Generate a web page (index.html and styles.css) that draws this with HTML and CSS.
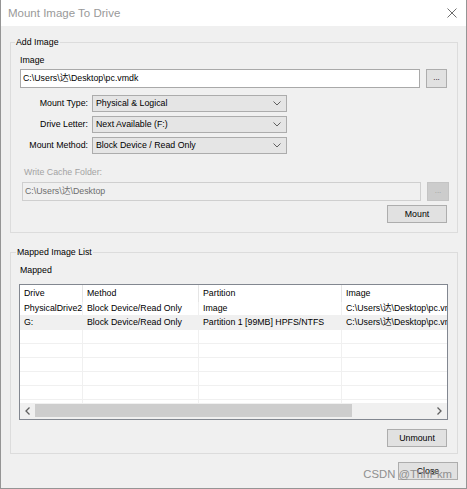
FILE: index.html
```html
<!DOCTYPE html>
<html>
<head>
<meta charset="utf-8">
<link rel="stylesheet" href="styles.css">
</head>
<body>
<div class="window">
  <div class="titlebar">
    <span class="title">Mount Image To Drive</span>
    <svg class="close-x" width="10" height="10" viewBox="0 0 10 10"><path d="M0.5 0.5 L9.5 9.5 M9.5 0.5 L0.5 9.5" stroke="#6e6e6e" stroke-width="1" fill="none"/></svg>
  </div>
  <div class="content">
    <div class="group group-add">
      <span class="legend">Add Image</span>
      <div class="lbl">Image</div>
      <div class="path-row">
        <div class="input">C:\Users\达\Desktop\pc.vmdk</div>
        <div class="btn btn-dots">...</div>
      </div>
      <div class="form-grid">
        <div class="flabel">Mount Type:</div>
        <div class="select"><span>Physical &amp; Logical</span><svg width="8" height="5" viewBox="0 0 8 5"><path d="M0.5 0.5 L4 4 L7.5 0.5" stroke="#5f5f5f" fill="none"/></svg></div>
        <div class="flabel">Drive Letter:</div>
        <div class="select"><span>Next Available (F:)</span><svg width="8" height="5" viewBox="0 0 8 5"><path d="M0.5 0.5 L4 4 L7.5 0.5" stroke="#5f5f5f" fill="none"/></svg></div>
        <div class="flabel">Mount Method:</div>
        <div class="select"><span>Block Device / Read Only</span><svg width="8" height="5" viewBox="0 0 8 5"><path d="M0.5 0.5 L4 4 L7.5 0.5" stroke="#5f5f5f" fill="none"/></svg></div>
      </div>
      <div class="lbl lbl-disabled">Write Cache Folder:</div>
      <div class="path-row path-row-disabled">
        <div class="input input-disabled">C:\Users\达\Desktop</div>
        <div class="btn btn-dots btn-disabled">...</div>
      </div>
      <div class="btn-line">
        <div class="btn">Mount</div>
      </div>
    </div>

    <div class="group group-list">
      <span class="legend">Mapped Image List</span>
      <div class="lbl lbl-mapped">Mapped</div>
      <div class="listview">
        <div class="lv-head">
          <div class="cell c1">Drive</div>
          <div class="cell c2">Method</div>
          <div class="cell c3">Partition</div>
          <div class="cell c4">Image</div>
        </div>
        <div class="lv-body">
          <div class="lv-row">
            <div class="cell c1">PhysicalDrive2</div>
            <div class="cell c2">Block Device/Read Only</div>
            <div class="cell c3">Image</div>
            <div class="cell c4">C:\Users\达\Desktop\pc.vmdk</div>
          </div>
          <div class="lv-row lv-sel">
            <div class="cell c1">G:</div>
            <div class="cell c2">Block Device/Read Only</div>
            <div class="cell c3">Partition 1 [99MB] HPFS/NTFS</div>
            <div class="cell c4">C:\Users\达\Desktop\pc.vmdk</div>
          </div>
          <div class="lv-row"><div class="cell c1"></div><div class="cell c2"></div><div class="cell c3"></div><div class="cell c4"></div></div>
          <div class="lv-row"><div class="cell c1"></div><div class="cell c2"></div><div class="cell c3"></div><div class="cell c4"></div></div>
          <div class="lv-row"><div class="cell c1"></div><div class="cell c2"></div><div class="cell c3"></div><div class="cell c4"></div></div>
          <div class="lv-row"><div class="cell c1"></div><div class="cell c2"></div><div class="cell c3"></div><div class="cell c4"></div></div>
          <div class="lv-row"><div class="cell c1"></div><div class="cell c2"></div><div class="cell c3"></div><div class="cell c4"></div></div>
          <div class="lv-row"><div class="cell c1"></div><div class="cell c2"></div><div class="cell c3"></div><div class="cell c4"></div></div>
        </div>
        <div class="hscroll">
          <div class="sb-arrow"><svg width="5" height="8" viewBox="0 0 5 8"><path d="M4.5 0.5 L1 4 L4.5 7.5" stroke="#606060" stroke-width="1.3" fill="none"/></svg></div>
          <div class="sb-track"><div class="sb-thumb"></div></div>
          <div class="sb-arrow"><svg width="5" height="8" viewBox="0 0 5 8"><path d="M0.5 0.5 L4 4 L0.5 7.5" stroke="#606060" stroke-width="1.3" fill="none"/></svg></div>
        </div>
      </div>
      <div class="btn-line btn-line-unmount">
        <div class="btn">Unmount</div>
      </div>
    </div>

    <div class="footer">
      <div class="btn">Close</div>
      <span class="watermark">CSDN @ThhPkm</span>
    </div>
  </div>
</div>
</body>
</html>
```
FILE: styles.css
```css
html, body {
  margin: 0;
  padding: 0;
  background: #f0f0f0;
}
body {
  font-family: "Liberation Sans", "Noto Sans CJK SC", sans-serif;
  font-size: 8.8px;
  line-height: 11px;
  color: #000;
}
.window {
  width: 467px;
  height: 489px;
  box-sizing: border-box;
  border-left: 1px solid #959595;
  border-right: 1px solid #959595;
  border-bottom: 1px solid #959595;
  background: #f0f0f0;
  display: flex;
  flex-direction: column;
}
.titlebar {
  height: 26px;
  background: #fff;
  display: flex;
  align-items: center;
  padding-left: 7px;
  padding-right: 9px;
  flex-shrink: 0;
}
.title {
  font-size: 11.5px;
  color: #999;
  line-height: 14px;
  flex: 1;
}
.close-x {
  display: block;
}
.content {
  display: flex;
  flex-direction: column;
}
.group {
  position: relative;
  border: 1px solid #dcdcdc;
  margin: 0 8px 0 9px;
  display: flex;
  flex-direction: column;
}
.group-add {
  margin-top: 16px;
  padding: 0 10px 9px 9px;
}
.group-list {
  margin-top: 19px;
  padding: 0 9px 6px 8px;
}
.legend {
  position: absolute;
  top: -6px;
  left: 4px;
  padding: 0 1px;
  background: #f0f0f0;
  line-height: 11px;
}
.group-list .legend {
  left: 5px;
}
.lbl {
  margin-top: 12px;
  height: 11px;
}
.lbl-disabled {
  color: #a3a3a3;
  margin-top: 13px;
  margin-left: 4px;
}
.lbl-mapped {
  margin-left: 1px;
}
.path-row {
  display: flex;
  gap: 6px;
  margin-top: 3px;
}
.path-row-disabled {
  margin: 4px -2px 0 2px;
}
.input {
  flex: 1;
  height: 19px;
  box-sizing: border-box;
  border: 1px solid #a9a9a9;
  background: #fff;
  padding-left: 2px;
  display: flex;
  align-items: center;
  white-space: nowrap;
  overflow: hidden;
}
.input-disabled {
  background: #f0f0f0;
  border-color: #cfcfcf;
  color: #6d6d6d;
}
.btn {
  box-sizing: border-box;
  width: 60px;
  height: 18px;
  border: 1px solid #adadad;
  background: #e1e1e1;
  display: flex;
  align-items: center;
  justify-content: center;
}
.btn-dots {
  width: 21px;
  height: 19px;
  align-items: center;
  padding-bottom: 2px;
  font-size: 8px;
}
.btn-disabled {
  width: 22px;
  background: #cccccc;
  border-color: #c4c4c4;
  color: #a0a0a0;
}
.form-grid {
  display: grid;
  grid-template-columns: 68px 195px;
  grid-auto-rows: 17px;
  column-gap: 4px;
  row-gap: 4px;
  margin-top: 7px;
}
.flabel {
  text-align: right;
  display: flex;
  align-items: center;
  justify-content: flex-end;
}
.select {
  box-sizing: border-box;
  border: 1px solid #acacac;
  background: #e5e5e5;
  display: flex;
  align-items: center;
  justify-content: space-between;
  padding: 0 5px 0 3px;
}
.select svg {
  display: block;
}
.btn-line {
  display: flex;
  justify-content: flex-end;
  margin-top: 4px;
}
.btn-line-unmount {
  margin-top: 9px;
  margin-right: 1px;
}
.listview {
  margin-top: 8px;
  height: 136px;
  box-sizing: border-box;
  border: 1px solid #828790;
  background: #fff;
  display: flex;
  flex-direction: column;
  overflow: hidden;
}
.lv-head, .lv-row {
  display: flex;
  flex-shrink: 0;
  white-space: nowrap;
}
.lv-head {
  height: 17px;
}
.lv-body {
  height: 101px;
  overflow: hidden;
  flex-shrink: 0;
}
.lv-row {
  height: 14px;
}
.lv-sel {
  background: #f0f0f0;
}
.cell {
  box-sizing: border-box;
  flex-shrink: 0;
  padding-left: 4px;
  display: flex;
  align-items: center;
  overflow: hidden;
}
.lv-head .cell {
  border-right: 1px solid #e5e5e5;
}
.lv-row .cell {
  border-right: 1px solid #f0f0f0;
  border-bottom: 1px solid #f0f0f0;
}
.c1 { width: 63px; }
.c2 { width: 116px; }
.c3 { width: 143px; }
.c4 { width: 160px; }
.hscroll {
  height: 16px;
  background: #f0f0f0;
  display: flex;
  flex-shrink: 0;
}
.sb-arrow {
  width: 15px;
  display: flex;
  align-items: center;
  justify-content: center;
}
.sb-arrow svg {
  display: block;
}
.sb-track {
  flex: 1;
  display: flex;
  align-items: flex-start;
}
.sb-thumb {
  margin-top: 1px;
  width: 317px;
  height: 13px;
  background: #cdcdcd;
}
.footer {
  position: relative;
  display: flex;
  justify-content: flex-end;
  margin: 8px 8px 0 0;
}
.watermark {
  position: absolute;
  right: 6px;
  top: 6px;
  font-size: 11.3px;
  line-height: 13px;
  color: #8f8f8f;
  white-space: nowrap;
}
```
